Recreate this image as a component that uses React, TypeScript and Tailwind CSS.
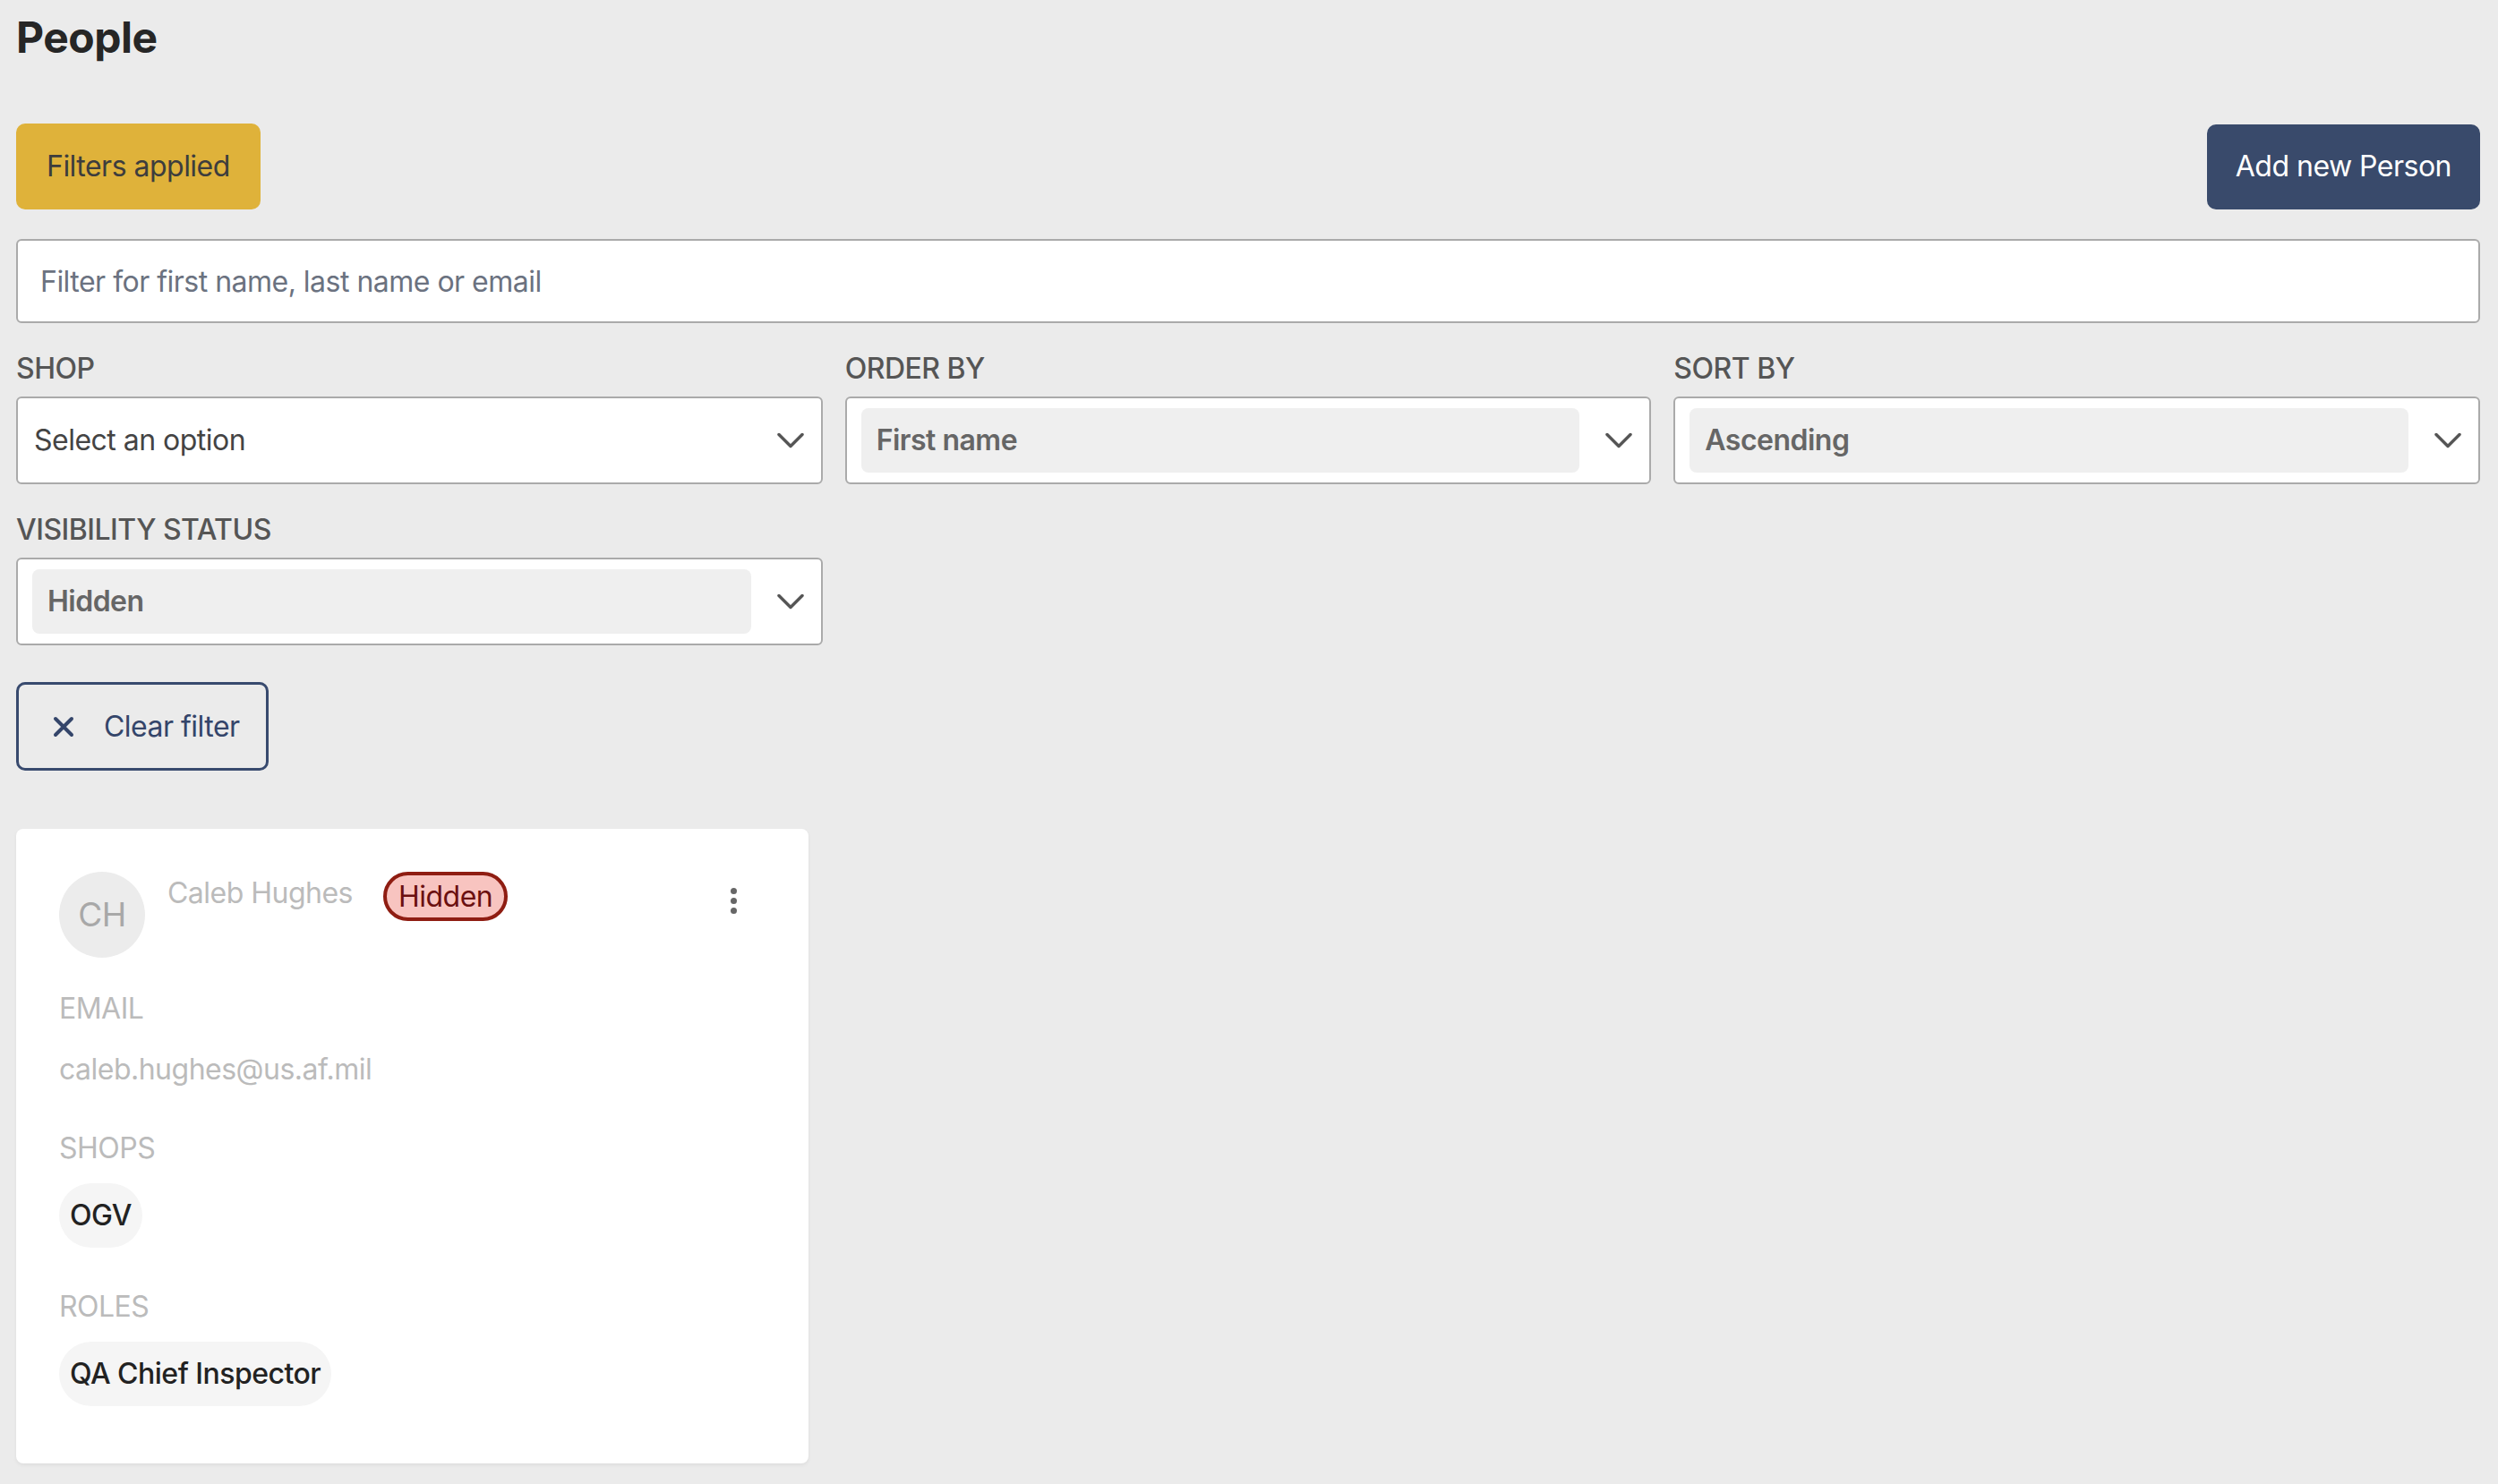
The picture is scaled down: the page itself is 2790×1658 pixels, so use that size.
import React from 'react';

const Chevron: React.FC = () => (
    <svg width="30" height="18" viewBox="0 0 30 18" fill="none" stroke="#555555" strokeWidth="3.5" strokeLinecap="round" strokeLinejoin="round">
        <path d="M2 2.5l13 13 13-13" />
    </svg>
);

interface SelectBoxProps {
    label: string;
    value?: string;
    placeholder?: string;
}

const SelectBox: React.FC<SelectBoxProps> = ({ label, value, placeholder }) => (
    <div className="flex flex-col">
        <span className="mb-[7px] text-[32px] leading-[48px] font-medium uppercase text-[#555555]">{label}</span>
        <div className="flex h-[98px] items-center rounded-[6px] border-2 border-[#aaaaaa] bg-white pl-[16px] pr-[19px]">
            {value ? (
                <div className="flex h-[72px] flex-1 items-center rounded-[8px] bg-[#efefef] px-[17px] text-[32px] font-semibold text-[#666666]">
                    {value}
                </div>
            ) : (
                <div className="flex-1 pl-[2px] text-[32px] text-[#444444]">{placeholder}</div>
            )}
            <div className="ml-[29px] flex items-center">
                <Chevron />
            </div>
        </div>
    </div>
);

const Chip: React.FC<{ text: string }> = ({ text }) => (
    <span className="inline-flex rounded-full bg-[#f5f5f5] px-[12px] py-[12px] text-[32px] leading-[48px] font-medium text-[#222222]">
        {text}
    </span>
);

const CardLabel: React.FC<{ text: string }> = ({ text }) => (
    <div className="text-[32px] leading-[48px] uppercase text-[#bbbbbb]">{text}</div>
);

const PersonCard: React.FC = () => (
    <div className="mt-[65px] w-[885px] rounded-[8px] bg-white px-[48px] pt-[48px] pb-[64px] shadow-[0_2px_4px_rgba(0,0,0,0.06)]">
        <div className="flex items-start">
            <div className="flex h-[96px] w-[96px] items-center justify-center rounded-full bg-[#ececec] text-[37px] text-[#a8a8a8]">
                CH
            </div>
            <span className="ml-[25px] text-[32px] leading-[48px] text-[#bbbbbb]">Caleb Hughes</span>
            <span className="ml-[34px] rounded-full border-4 border-[#8f1d12] bg-[#f8c4c0] px-[13px] text-[32px] leading-[47px] text-[#6b1010]">
                Hidden
            </span>
            <button className="ml-auto mr-[4px] flex h-[64px] w-[64px] flex-col items-center justify-center gap-[4px]">
                <span className="h-[7px] w-[7px] rounded-full bg-[#666666]" />
                <span className="h-[7px] w-[7px] rounded-full bg-[#666666]" />
                <span className="h-[7px] w-[7px] rounded-full bg-[#666666]" />
            </button>
        </div>

        <div className="mt-[33px]">
            <CardLabel text="Email" />
            <div className="mt-[20px] text-[32px] leading-[48px] text-[#bbbbbb]">caleb.hughes@us.af.mil</div>
        </div>

        <div className="mt-[40px]">
            <CardLabel text="Shops" />
            <div className="mt-[15px] flex">
                <Chip text="OGV" />
            </div>
        </div>

        <div className="mt-[42px]">
            <CardLabel text="Roles" />
            <div className="mt-[15px] flex">
                <Chip text="QA Chief Inspector" />
            </div>
        </div>
    </div>
);

const App: React.FC = () => {
    return (
        <div className="min-h-screen bg-[#ebebeb] pl-[18px] pr-[20px] pt-[18px] pb-[24px] font-['Inter','Liberation_Sans',sans-serif] tracking-[-0.032em]">
            <h1 className="text-[48px] leading-[48px] font-bold text-[#262626]">People</h1>

            <div className="mt-[72px] flex items-center justify-between">
                <button className="h-[96px] rounded-[10px] bg-[#dfb23a] px-[34px] text-[32px] text-[#3d3d3d]">
                    Filters applied
                </button>
                <button className="h-[95px] rounded-[10px] bg-[#394a6b] px-[32px] text-[32px] text-white">
                    Add new Person
                </button>
            </div>

            <input
                type="text"
                placeholder="Filter for first name, last name or email"
                className="mt-[33px] block h-[94px] w-full rounded-[6px] border-2 border-[#aaaaaa] bg-white pl-[25px] text-[32px] text-[#333333] placeholder:text-[#6b7280] focus:outline-none"
            />

            <div className="mt-[27px] grid grid-cols-3 gap-x-[25px] gap-y-[27px]">
                <SelectBox label="Shop" placeholder="Select an option" />
                <SelectBox label="Order by" value="First name" />
                <SelectBox label="Sort by" value="Ascending" />
                <SelectBox label="Visibility status" value="Hidden" />
            </div>

            <button className="mt-[41px] flex h-[99px] items-center rounded-[10px] border-[3px] border-[#384a6e] pl-[38px] pr-[29px] text-[32px] text-[#34456a]">
                <svg width="24" height="24" viewBox="0 0 24 24" fill="none" stroke="#34456a" strokeWidth="4" strokeLinecap="round">
                    <path d="M3 3l18 18M21 3L3 21" />
                </svg>
                <span className="ml-[33px]">Clear filter</span>
            </button>

            <PersonCard />
        </div>
    );
};

export default App;
